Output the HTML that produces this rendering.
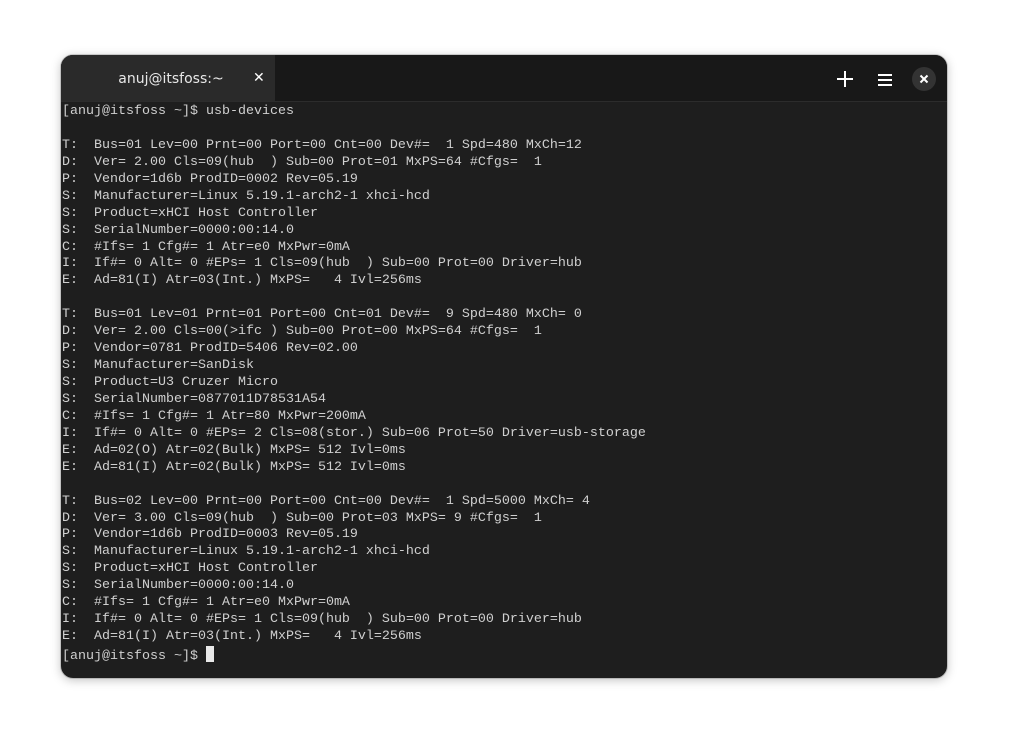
<!DOCTYPE html>
<html><head><meta charset="utf-8"><style>
html,body{margin:0;padding:0;background:#fff;width:1009px;height:746px;overflow:hidden}
.win{position:absolute;left:61px;top:55px;width:886px;height:623px;background:#1e1e1e;border-radius:12px;overflow:hidden;box-shadow:0 2px 10px rgba(0,0,0,.25),0 0 0 1px rgba(0,0,0,.15)}
.hdr{position:absolute;left:0;top:0;width:886px;height:46px;background:#181818;border-bottom:1px solid #2c2c2c}
.tab{position:absolute;left:0;top:0;width:214px;height:46px;background:#2a2a2a}
.tab .t{position:absolute;left:3px;width:214px;top:16px;text-align:center;color:#e8e8e8;font:14px "DejaVu Sans","Liberation Sans",sans-serif}
.tab .x{position:absolute;left:192px;top:15px;color:#fff;font:bold 14px "DejaVu Sans",sans-serif}
.plus{position:absolute;left:775px;top:15px}
.menu{position:absolute;left:816px;top:18px}
.close{position:absolute;left:851px;top:12px;width:24px;height:24px;border-radius:12px;background:#333}
pre{position:absolute;left:1px;top:49px;margin:0;color:#d0d0d0;font:13.33px/16.94px "Liberation Mono","DejaVu Sans Mono",monospace}
.cur{display:inline-block;width:8px;height:16px;background:#e8e8e8;vertical-align:-3px}
</style></head><body>
<div class="win">
<div class="hdr">
<div class="tab"><div class="t">anuj@itsfoss:~</div><div class="x">✕</div></div>
<svg class="plus" width="18" height="18"><path d="M9 1V17M1 9H17" stroke="#fff" stroke-width="2"/></svg>
<svg class="menu" width="16" height="14"><path d="M1 2H15M1 7H15M1 12H15" stroke="#fff" stroke-width="2"/></svg>
<div class="close"><svg width="24" height="24"><path d="M8.5 8.5L15.5 15.5M15.5 8.5L8.5 15.5" stroke="#fff" stroke-width="2"/></svg></div>
</div>
<pre>[anuj@itsfoss ~]$ usb-devices

T:  Bus=01 Lev=00 Prnt=00 Port=00 Cnt=00 Dev#=  1 Spd=480 MxCh=12
D:  Ver= 2.00 Cls=09(hub  ) Sub=00 Prot=01 MxPS=64 #Cfgs=  1
P:  Vendor=1d6b ProdID=0002 Rev=05.19
S:  Manufacturer=Linux 5.19.1-arch2-1 xhci-hcd
S:  Product=xHCI Host Controller
S:  SerialNumber=0000:00:14.0
C:  #Ifs= 1 Cfg#= 1 Atr=e0 MxPwr=0mA
I:  If#= 0 Alt= 0 #EPs= 1 Cls=09(hub  ) Sub=00 Prot=00 Driver=hub
E:  Ad=81(I) Atr=03(Int.) MxPS=   4 Ivl=256ms

T:  Bus=01 Lev=01 Prnt=01 Port=00 Cnt=01 Dev#=  9 Spd=480 MxCh= 0
D:  Ver= 2.00 Cls=00(>ifc ) Sub=00 Prot=00 MxPS=64 #Cfgs=  1
P:  Vendor=0781 ProdID=5406 Rev=02.00
S:  Manufacturer=SanDisk
S:  Product=U3 Cruzer Micro
S:  SerialNumber=0877011D78531A54
C:  #Ifs= 1 Cfg#= 1 Atr=80 MxPwr=200mA
I:  If#= 0 Alt= 0 #EPs= 2 Cls=08(stor.) Sub=06 Prot=50 Driver=usb-storage
E:  Ad=02(O) Atr=02(Bulk) MxPS= 512 Ivl=0ms
E:  Ad=81(I) Atr=02(Bulk) MxPS= 512 Ivl=0ms

T:  Bus=02 Lev=00 Prnt=00 Port=00 Cnt=00 Dev#=  1 Spd=5000 MxCh= 4
D:  Ver= 3.00 Cls=09(hub  ) Sub=00 Prot=03 MxPS= 9 #Cfgs=  1
P:  Vendor=1d6b ProdID=0003 Rev=05.19
S:  Manufacturer=Linux 5.19.1-arch2-1 xhci-hcd
S:  Product=xHCI Host Controller
S:  SerialNumber=0000:00:14.0
C:  #Ifs= 1 Cfg#= 1 Atr=e0 MxPwr=0mA
I:  If#= 0 Alt= 0 #EPs= 1 Cls=09(hub  ) Sub=00 Prot=00 Driver=hub
E:  Ad=81(I) Atr=03(Int.) MxPS=   4 Ivl=256ms
[anuj@itsfoss ~]$ <span class="cur"></span></pre>
</div>
</body></html>
